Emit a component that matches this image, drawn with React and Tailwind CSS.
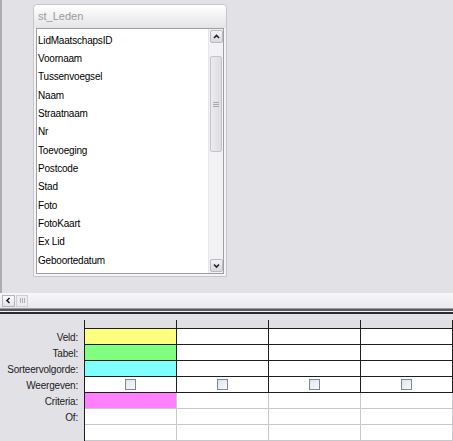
import React from 'react';

const fields = [
  'LidMaatschapsID',
  'Voornaam',
  'Tussenvoegsel',
  'Naam',
  'Straatnaam',
  'Nr',
  'Toevoeging',
  'Postcode',
  'Stad',
  'Foto',
  'FotoKaart',
  'Ex Lid',
  'Geboortedatum',
];

const rows = [
  { label: 'Veld:', first: 'bg-[#ffff80]', dark: true },
  { label: 'Tabel:', first: 'bg-[#80ff80]', dark: true },
  { label: 'Sorteervolgorde:', first: 'bg-[#80ffff]', dark: true },
  { label: 'Weergeven:', first: 'bg-white', dark: true, check: true },
  { label: 'Criteria:', first: 'bg-[#ff80ff]', dark: false },
  { label: 'Of:', first: 'bg-white', dark: false },
  { label: '', first: 'bg-white', dark: false },
];

const Chevron = ({ dir }) => {
  const pts = {
    up: '2,6 4.5,3.5 7,6',
    down: '2,3.5 4.5,6 7,3.5',
    left: '5.5,2 3,4.5 5.5,7',
  }[dir];
  return (
    <svg width="9" height="9" viewBox="0 0 9 9">
      <polyline points={pts} fill="none" stroke="#222" strokeWidth="1.6" />
    </svg>
  );
};

const ScrollButton = ({ dir }) => (
  <div className="w-[13px] h-[13px] mx-auto flex items-center justify-center border border-[#b9b9be] rounded-[2px] bg-gradient-to-b from-[#f4f4f6] to-[#d9d9de]">
    <Chevron dir={dir} />
  </div>
);

const TableBox = () => (
  <div className="w-[194px] h-[273px] border border-[#c6c5ca] rounded-t-[4px] bg-[#f4f4f6] flex flex-col pb-[2px] px-[2px]">
    <div className="h-[23px] -mx-[2px] px-[4px] flex items-center rounded-t-[4px] bg-gradient-to-b from-white to-[#e4e4e8] text-[11px] text-[#9a9a9a]">
      st_Leden
    </div>
    <div className="flex-1 flex border border-[#9d9da2] bg-white">
      <div className="flex-1 pt-[2px] pl-[1px] text-[10px] tracking-[-0.2px] text-black">
        {fields.map(f => (
          <div key={f} className="h-[18.33px] flex items-center">{f}</div>
        ))}
      </div>
      <div className="w-[15px] flex flex-col border-l border-[#e6e6ea] bg-[#f2f2f4] py-[1px]">
        <ScrollButton dir="up" />
        <div className="h-[13px]" />
        <div className="h-[96px] mx-[1px] border border-[#c3c3c8] rounded-[2px] bg-gradient-to-r from-[#ececf0] to-[#dcdce1] flex flex-col items-center justify-center gap-[1px]">
          <div className="w-[6px] h-px bg-[#a8a8ad]" />
          <div className="w-[6px] h-px bg-[#a8a8ad]" />
          <div className="w-[6px] h-px bg-[#a8a8ad]" />
        </div>
        <div className="flex-1" />
        <ScrollButton dir="down" />
      </div>
    </div>
  </div>
);

const Checkbox = () => (
  <div className="w-[11px] h-[11px] border border-[#7d8896] bg-gradient-to-br from-[#dfe5ec] to-[#f7f9fb]" />
);

export default function App() {
  return (
    <div
      className="w-[453px] h-[441px] overflow-hidden bg-[#e2e1e6] flex flex-col"
      style={{ fontFamily: '"Liberation Sans", Arial, sans-serif' }}
    >
      {/* design canvas */}
      <div className="h-[293px] border-l-2 border-[#adacb1] pl-[31px] pt-[4px]">
        <TableBox />
      </div>

      {/* horizontal scrollbar */}
      <div className="h-[15px] bg-gradient-to-b from-[#f7f7f9] to-[#eaeaee] flex items-center pl-[2px] gap-[1px]">
        <div className="w-[13px] h-[12px] flex items-center justify-center border border-[#b5b5ba] bg-gradient-to-b from-white to-[#e3e3e8]">
          <Chevron dir="left" />
        </div>
        <div className="w-[12px] h-[12px] flex items-center justify-center gap-[1px] border border-[#cfcfd4] bg-[#ededf1]">
          <div className="w-px h-[5px] bg-[#b0b0b5]" />
          <div className="w-px h-[5px] bg-[#b0b0b5]" />
          <div className="w-px h-[5px] bg-[#b0b0b5]" />
        </div>
      </div>

      {/* splitter */}
      <div className="h-px bg-[#9c9ca0]" />
      <div className="h-[2px] bg-[#5a5a5e]" />
      <div className="h-px bg-[#f2f2f4]" />
      <div className="h-[2px] bg-[#2b2b2e]" />

      {/* query grid */}
      <div className="flex-1 flex pt-[6px] text-[10px] tracking-[-0.2px] text-[#222]">
        <div className="w-[84px] flex flex-col">
          <div className="h-[9px]" />
          {rows.map((r, i) => (
            <div key={i} className="h-[16px] flex items-center justify-end pr-[6px]">
              {r.label}
            </div>
          ))}
        </div>
        <div className="flex-1 flex flex-col border-l border-[#1e1e1e]">
          <div className="h-[9px] flex border-b border-[#1e1e1e] bg-[#e0e0e4]">
            {[0, 1, 2, 3].map(c => (
              <div key={c} className="w-[92px] border-r border-[#1e1e1e]" />
            ))}
          </div>
          {rows.map((r, i) => (
            <div key={i} className={`h-[16px] flex border-b ${r.dark ? 'border-[#1e1e1e]' : 'border-[#c8c8cc]'}`}>
              {[0, 1, 2, 3].map(c => (
                <div
                  key={c}
                  className={`w-[92px] border-r flex items-center justify-center ${r.dark ? 'border-[#1e1e1e]' : 'border-[#c8c8cc]'} ${c === 0 ? r.first : 'bg-white'}`}
                >
                  {r.check && <Checkbox />}
                </div>
              ))}
            </div>
          ))}
        </div>
      </div>
    </div>
  );
}
